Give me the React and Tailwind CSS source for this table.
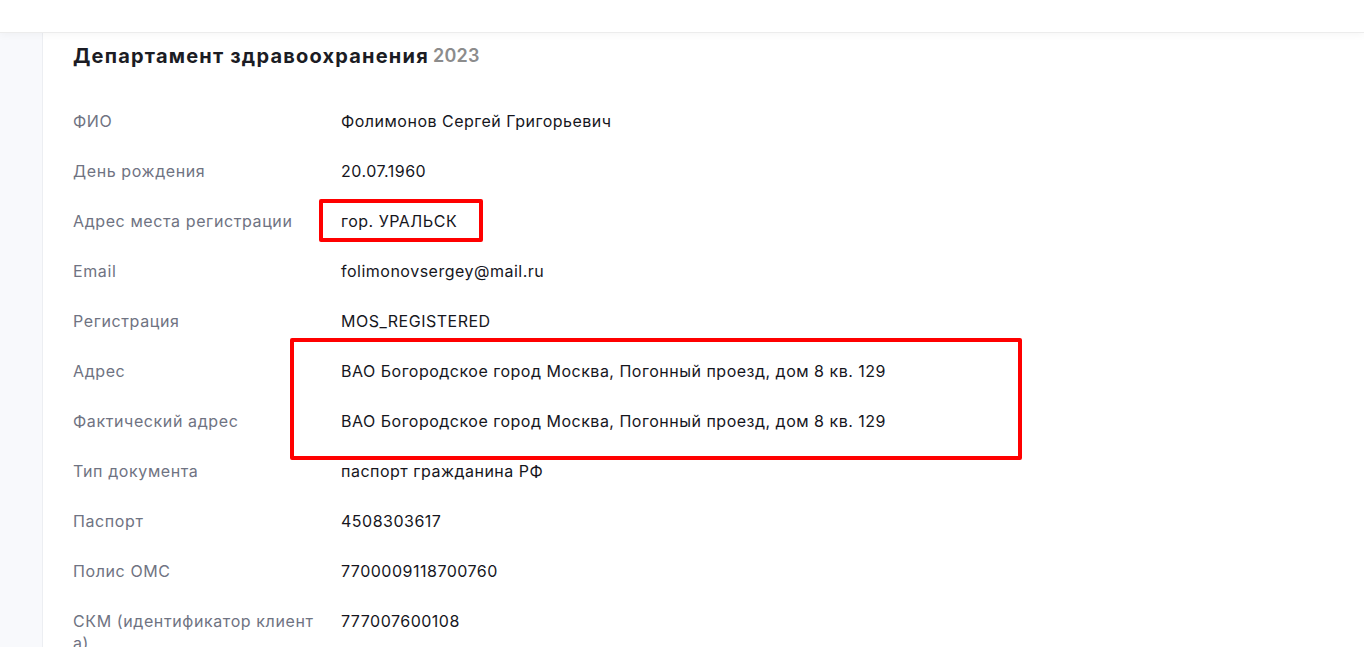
import React from "react";

const rows = [
  ["ФИО", "Фолимонов Сергей Григорьевич"],
  ["День рождения", "20.07.1960"],
  ["Адрес места регистрации", "гор. УРАЛЬСК"],
  ["Email", "folimonovsergey@mail.ru"],
  ["Регистрация", "MOS_REGISTERED"],
  ["Адрес", "ВАО Богородское город Москва, Погонный проезд, дом 8 кв. 129"],
  ["Фактический адрес", "ВАО Богородское город Москва, Погонный проезд, дом 8 кв. 129"],
  ["Тип документа", "паспорт гражданина РФ"],
  ["Паспорт", "4508303617"],
  ["Полис ОМС", "7700009118700760"],
  ["СКМ (идентификатор клиента)", "777007600108"],
];

export default function App() {
  return (
    <div
      className="relative h-[647px] w-[1364px] overflow-hidden bg-white"
      style={{ fontFamily: "Inter, 'Noto Sans', sans-serif" }}
    >
      <header className="relative z-10 h-[33px] border-b border-[#ececec] bg-white shadow-[0_2px_8px_rgba(0,0,0,0.04)]" />
      <div className="flex h-[614px]">
        <aside className="w-[43px] shrink-0 border-r border-[#eceef2] bg-[#f8f9fc]" />
        <main className="flex-1 pl-[30px]">
          <h1 className="mt-[10px] flex h-[26px] items-center text-[20px] font-bold leading-none tracking-[1.2px] text-[#1b1c24]">
            Департамент здравоохранения
            <span className="ml-[4px] text-[18px] font-semibold tracking-[0.3px] text-[#8c8c8c]">2023</span>
          </h1>
          <div className="mt-[27px]">
            {rows.map(([label, value]) => (
              <div key={label} className="flex h-[50px] items-start pt-[14px] text-[16px] leading-[22px]">
                <div className="w-[246px] shrink-0 break-all tracking-[0.6px] text-[#6f7382]">{label}</div>
                <div className="ml-[22px] tracking-[0.5px] text-[#16161d]">{value}</div>
              </div>
            ))}
          </div>
        </main>
      </div>
      <div className="absolute left-[319px] top-[199px] h-[43px] w-[164px] rounded-[2px] border-[4px] border-[#ff0000]" />
      <div className="absolute left-[290px] top-[338px] h-[122px] w-[732px] rounded-[2px] border-[4px] border-[#ff0000]" />
    </div>
  );
}
